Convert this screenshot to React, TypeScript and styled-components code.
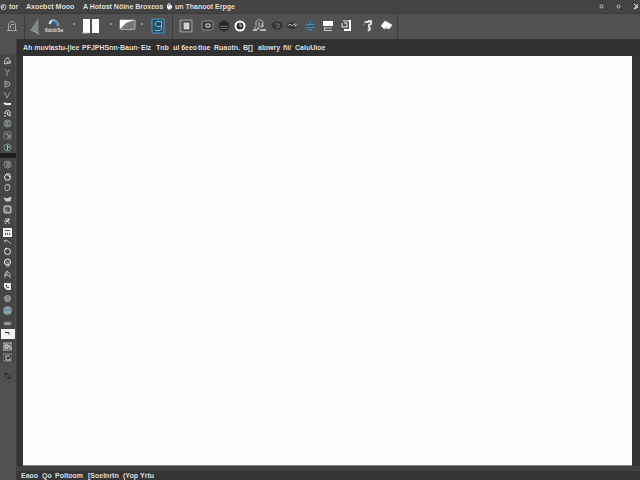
import React from "react";
import styled, { createGlobalStyle } from "styled-components";

const Global = createGlobalStyle`
  * { box-sizing: border-box; }
  body {
    margin: 0;
    background: #343434;
    color: #dedede;
    font-family: "Liberation Sans", sans-serif;
  }
  button {
    appearance: none;
    border: 0;
    padding: 0;
    margin: 0;
    background: none;
    color: inherit;
    font: inherit;
  }
  svg { display: block; flex: none; fill: none; stroke: #c4c4c4; stroke-width: 1; }
`;

const Frame = styled.div`
  display: flex;
  flex-direction: column;
  min-height: 100vh;
`;

const MenuBar = styled.header`
  display: flex;
  align-items: center;
  height: 13px;
  background: #434343;
  font-size: 7px;
  font-weight: 700;
  line-height: 12px;
`;

const Menus = styled.nav`
  display: flex;
  align-items: center;
  flex: 1;
  min-width: 0;
`;

const TextButton = styled.button<{ $w: number }>`
  display: flex;
  align-items: center;
  gap: 2px;
  flex: none;
  width: ${p => p.$w}px;
  white-space: nowrap;
`;

const WindowButtons = styled.div`
  display: flex;
  flex: none;
  gap: 8px;
`;

const WindowButton = styled.button`
  display: flex;
  align-items: center;
  justify-content: center;
  width: 9px;
  height: 12px;
`;

const Toolbar = styled.div`
  display: flex;
  align-items: center;
  height: 26px;
  background: #515151;
  border-top: 1px solid #3b3b3b;
`;

const Tool = styled.button<{ $w: number }>`
  display: flex;
  flex: none;
  flex-direction: column;
  align-items: center;
  justify-content: center;
  width: ${p => p.$w}px;
  height: 24px;
  padding-bottom: 2px;
`;

const ToolLabel = styled.span`
  font-size: 5px;
  font-weight: 700;
  line-height: 5px;
  white-space: nowrap;
`;

const Rule = styled.span`
  flex: none;
  width: 1px;
  height: 24px;
  background: #3a3a3a;
`;

const Gap = styled.span<{ $w: number }>`
  flex: none;
  width: ${p => p.$w}px;
`;

const Dot = styled.span<{ $w: number }>`
  display: flex;
  justify-content: center;
  flex: none;
  width: ${p => p.$w}px;
  padding-bottom: 6px;
  &::after {
    content: "";
    width: 2px;
    height: 2px;
    background: #8c8c8c;
  }
`;

const Body = styled.div`
  display: flex;
  flex: 1;
`;

const Rail = styled.aside`
  display: flex;
  flex: none;
  flex-direction: column;
  width: 17px;
  padding-top: 15px;
  background: #505050;
  border-right: 1px solid #3d3d3d;
`;

const RailGroup = styled.div`
  display: flex;
  flex-direction: column;
  width: 15px;
  background: #454545;
`;

const RailTool = styled.button<{ $h: number; $dim?: boolean }>`
  display: flex;
  align-items: center;
  justify-content: center;
  width: 15px;
  height: ${p => p.$h}px;
  opacity: ${p => (p.$dim ? 0.4 : 1)};
`;

const RailSplit = styled.span`
  width: 16px;
  height: 5px;
  background: #1f1f1f;
`;

const RailEnd = styled.div`
  padding-top: 6px;
`;

const Work = styled.main`
  display: flex;
  flex: 1;
  flex-direction: column;
  min-width: 0;
  background: #353535;
`;

const Tabs = styled.nav`
  display: flex;
  align-items: center;
  height: 17px;
  padding-left: 6px;
  background: #303030;
  font-size: 7px;
  font-weight: 700;
  line-height: 10px;
`;

const Sheet = styled.section`
  flex: 1;
  margin: 0 8px 0 6px;
  background: #fefefe;
  border-bottom: 1px solid #8a8a8a;
`;

const Status = styled.footer`
  display: flex;
  align-items: center;
  height: 14px;
  padding: 1px 0 0 4px;
  border-top: 5px solid #414141;
  font-size: 7px;
  font-weight: 700;
  line-height: 8px;
`;

const tabs: [string, number][] = [
  ["Ah muvlastu-(lee", 59], ["PFJPHSnn·", 38], ["Baun·", 21], ["Elz", 15],
  ["Tnb", 17], ["ul 6eeo", 25], ["tloe", 16], ["Ruaotn.", 29], ["B[]", 15],
  ["alowry", 25], ["ñl/", 12], ["CaluUioe", 32],
];

const statusItems: [string, number][] = [
  ["Eaoo", 21], ["Qo", 13], ["Poitoom", 33], ["[Soelnrtn", 35], ["(Yop", 17], ["Yrtu", 20],
];

const Icon = ({ w, h, children }: { w: number; h: number; children: React.ReactNode }) => (
  <svg width={w} height={h} viewBox={`0 0 ${w} ${h}`} aria-hidden="true">{children}</svg>
);

const tools: Record<string, React.ReactNode> = {
  Alerts: <Icon w={12} h={12}><path d="M1 10.500h10M2.500 10V5.500C2.500 0 9.500 0 9.500 5.500V10M5 4.500h3M4.500 8.500V5M7 8h1" stroke="#aaa" /></Icon>,
  Shape: <Icon w={12} h={18}><path d="M9.500 1v16L1 13.500z" fill="#7d8987" stroke="none" /><path d="M5 14l5 3.500" stroke="#a8b4b0" /></Icon>,
  Arc: <Icon w={12} h={9}><path d="M1.500 5C3-.5 9 .5 10 7" stroke="#dce7f1" strokeWidth="2" /><path d="M4 2.500C8 1.500 9 4 9.500 7" stroke="#3482c6" strokeWidth="2" /></Icon>,
  Columns: <Icon w={18} h={16}><path d="M1 1h7v14H1zM10 1h7v14h-7z" fill="#fff" stroke="none" /><path d="M0 15h7" stroke="#bbb" /></Icon>,
  Picture: <Icon w={18} h={13}><path d="M1 1h15v9l-8 1-7-1z" fill="#777" stroke="#b5b5b5" /><path d="M1 1h14L7 4 1 10z" fill="#fff" stroke="none" /><path d="M5 11l2 1.500 1-1" stroke="#333" /></Icon>,
  Swirl: <Icon w={14} h={16}><path d="M1 1h12v14H1z" fill="#26526a" stroke="#5394b5" /><path d="M10.500 3.500H6L4.500 5v2L6 8.500h4.500v-5M10.500 8v3L9 12.500H4" stroke="#77b8d3" /><path d="M6 6h3" stroke="#1d3346" /></Icon>,
  Frame: <Icon w={14} h={14}><path d="M1 1h12v12H1z" fill="#666" stroke="#999" /><path d="M4 3h7v8H4z" fill="#d4d4d4" stroke="#292929" /></Icon>,
  Camera: <Icon w={13} h={11}><rect x="1" y="1" width="11" height="9" rx="2" fill="#343434" stroke="#8d8d8d" /><path d="M5 4h4v3H5z" stroke="#ddd" /></Icon>,
  Disc: <Icon w={12} h={12}><circle cx="6" cy="6" r="5" fill="#292929" stroke="#343434" /><path d="M2 6.500h8M3 8.500h6" stroke="#666" /></Icon>,
  Clock: <Icon w={12} h={14}><circle cx="6" cy="7" r="4.500" fill="#303030" stroke="#fff" strokeWidth="2" /><path d="M6 4v3h2" stroke="#ddd" /></Icon>,
  People: <Icon w={15} h={13}><path d="M4 7V3.500C4 0 11 0 11 4v4M1 11h4l1-3 2 3h6M2 9l2-1M7 3v4l3 1V4" stroke="#bcbcbc" /><path d="M1 11h4M9 11h5" stroke="#eee" /></Icon>,
  Lens: <Icon w={12} h={9}><ellipse cx="6" cy="4.500" rx="5" ry="3.500" fill="#383838" stroke="#303030" /><path d="M4 3h4v3H5" stroke="#757575" /></Icon>,
  Eye: <Icon w={12} h={9}><ellipse cx="6" cy="4.500" rx="5" ry="3.500" fill="#303030" stroke="#454545" /><path d="M2 5l2-2 2 2 2-2h2v2H8" stroke="#b7b7b7" /></Icon>,
  Globe: <Icon w={12} h={12}><circle cx="6" cy="6" r="4.500" fill="#345169" stroke="#44677f" /><path d="M2 4.500h8M2 7.500h8M6 2v4M4 9.500h4" stroke="#5788a6" /></Icon>,
  Print: <Icon w={12} h={12}><path d="M1 1h10v5H1z" fill="#fff" stroke="none" /><path d="M2 8h8M3 10.500h7M2.500 7v4" stroke="#ccc" /></Icon>,
  Page: <Icon w={12} h={13}><path d="M3 2h6M2 4v4h5V4H4" stroke="#eee" /><path d="M10 1v10H4" stroke="#fff" strokeWidth="2" /></Icon>,
  Figure: <Icon w={10} h={13}><path d="M2 3h3l1-1h2v3L6 6v2l1 2-2 2" stroke="#ddd" strokeWidth="2" /><path d="M1 2v5" stroke="#868686" /></Icon>,
  Eraser: <Icon w={13} h={11}><path d="M5 1l7 4-3 4-2-1-3 1-3-3z" fill="#fff" stroke="#ddd" /><path d="M1 6l3 3 3-2" stroke="#aaa" /></Icon>,
};

const rail: Record<string, React.ReactNode> = {
  lasso: <path d="M1.500 6c0-2 1-2 2-4h2c1 1-1 2 2 3v2l-6 1zM3 6h4" />,
  nib: <path d="M2 1l2 3v4M6 1v2L4 4" stroke="#999" />,
  flag: <path d="M2 8V2l5 2-1 3-4 1M3 5h2" stroke="#aaa" />,
  vee: <path d="M1.500 2L4 8l3-6" stroke="#919b98" />,
  brush: <path d="M1 4c2 2 5 1 7 1" stroke="#f4f4f4" strokeWidth="2" />,
  stamp: <path d="M2 6c-1-3 4-5 5-2s-2 4-3 2l1-2M1 8h2M6 7l2 1" stroke="#eee" />,
  ring: <><circle cx="4.500" cy="4.500" r="3.500" stroke="#899692" /><path d="M2 3h5M2 6h5M4 3v3" stroke="#a3aba8" /></>,
  board: <><path d="M1 1h7v7H1z" stroke="#708078" /><path d="M2 3h3v2h3M4 7l3-1" stroke="#a1aaa4" /></>,
  ball: <><circle cx="4.500" cy="4.500" r="3.500" fill="#36413c" stroke="#8a9b91" /><path d="M4.500 2v5M5 4h2" stroke="#bbc5be" /></>,
  target: <><circle cx="4.500" cy="4.500" r="3.500" stroke="#929292" /><path d="M3 3h3v3H4V4" stroke="#aaa" /></>,
  bag: <path d="M1.500 5l2-3h3l1 3-1 3h-4zM3 2l4 3" stroke="#eee" />,
  shield: <path d="M2 3l2-2 3 2-1 4-3 1-1-2zM4 2h3" stroke="#b2b2b2" />,
  leaf: <path d="M1 4l3 1 4-2-1 4H3z" fill="#ccc" stroke="#ccc" />,
  photo: <><rect x="1" y="1" width="7" height="7" rx="1" fill="#888" stroke="#ccc" /><path d="M3 5V3h3v3H4" stroke="#333" /></>,
  person: <path d="M2 3h4L4 5l3 3M2 8l2-3M1 5h5M6 2v3" stroke="#d0d0d0" />,
  save: <><path d="M0 0h9v9H0z" fill="#eee" stroke="#fff" /><path d="M2 2.500h5M2.500 5v2M4.500 5v2M6.500 5v2" stroke="#555" /></>,
  curve: <path d="M1 3l2-1 3 2 2 2M1 4l2-1" stroke="#bdbdbd" />,
  circle: <><circle cx="4.500" cy="4.500" r="3" stroke="#eee" /><path d="M2 2l2-1" stroke="#fff" /></>,
  head: <><circle cx="4.500" cy="4" r="3" stroke="#fff" /><path d="M3 4h3M3 8h4M5 5v3" stroke="#dca7a4" /></>,
  anchor: <path d="M2 8V4l2-3 3 3v4M4 2v3l2 1M1 5h3" stroke="#afbab6" />,
  cup: <path d="M2 2h5v5H4L2 5zM4 4h3" stroke="#e5e5e5" strokeWidth="2" />,
  wheel: <><circle cx="4.500" cy="4.500" r="3" fill="#777" stroke="#aaa" /><path d="M3 3v4M5 3v4M7 4v2" stroke="#999" /></>,
  blue: <><rect x="1" y="1" width="7" height="7" rx="2" fill="#657e8b" stroke="#a1b3bc" /><path d="M2 6h5M3 3h3" stroke="#bdd0d3" /></>,
  bar: <><path d="M1 4h7v3H1z" fill="#bbc3be" stroke="#606966" /><path d="M3 5h4" stroke="#6d8580" /></>,
  camera: <><path d="M0 1h9v7H0z" fill="#606060" stroke="#bbb" /><path d="M2 3h3v3H2zM6 3l2 4" stroke="#eee" /></>,
  slide: <><path d="M0 1h9v7H0z" fill="#393939" stroke="#999" /><path d="M2 3h5M3 3v4h4V5" stroke="#ccc" /></>,
};

const upperRail: [string, number][] = [
  ["lasso", 12], ["nib", 12], ["flag", 11], ["vee", 10], ["brush", 8],
  ["stamp", 10], ["ring", 12], ["board", 12], ["ball", 12],
];
const lowerRail: [string, number][] = [
  ["target", 12], ["bag", 12], ["shield", 11], ["leaf", 11], ["photo", 11],
  ["person", 11], ["save", 12], ["curve", 8], ["circle", 11], ["head", 11],
  ["anchor", 12], ["cup", 12], ["wheel", 12], ["blue", 12], ["bar", 12],
  ["selected", 12], ["camera", 12], ["slide", 11],
];

const RailIcon = ({ name }: { name: string }) =>
  name === "selected" ? (
    <Icon w={15} h={10}><path d="M1 0h14v10H1z" fill="#f4f4f4" stroke="none" /><path d="M5 3.500h4v2" stroke="#333" /></Icon>
  ) : (
    <Icon w={9} h={9}>{rail[name]}</Icon>
  );

const RailButtons = ({ items }: { items: [string, number][] }) => (
  <RailGroup>
    {items.map(([name, h]) => (
      <RailTool key={name} $h={h} aria-label={name}><RailIcon name={name} /></RailTool>
    ))}
  </RailGroup>
);

const ToolButton = ({ name, w }: { name: string; w: number }) => (
  <Tool $w={w} aria-label={name}>{tools[name]}</Tool>
);

export default function App() {
  return (
    <>
      <Global />
      <Frame>
        <MenuBar>
          <Menus>
            <TextButton $w={26}>
              <Icon w={7} h={8}><circle cx="3.500" cy="4" r="2.500" /><path d="M3 2v3M1 4h3" /></Icon>tor
            </TextButton>
            <TextButton $w={57}>Axoebct Mooo</TextButton>
            <TextButton $w={83}>A Hotost Nöine Broxeos</TextButton>
            <TextButton $w={80}>
              <Icon w={7} h={9}><path d="M3 1l3 3v2L3 8 1 6V3z" fill="#eee" stroke="none" /><path d="M3 2v2" stroke="#666" /></Icon>un Thanoot Erpge
            </TextButton>
          </Menus>
          <WindowButtons>
            <WindowButton aria-label="Minimize"><Icon w={5} h={5}><circle cx="2.500" cy="2.500" r="1.500" /></Icon></WindowButton>
            <WindowButton aria-label="Maximize"><Icon w={5} h={5}><circle cx="2.500" cy="2.500" r="1.500" /></Icon></WindowButton>
            <WindowButton aria-label="Close"><Icon w={6} h={7}><path d="M1 1l4 3-4 2M5 1L1 6" stroke="#eee" /></Icon></WindowButton>
          </WindowButtons>
        </MenuBar>
        <Toolbar>
          <ToolButton name="Alerts" w={24} />
          <Rule />
          <ToolButton name="Shape" w={19} />
          <Tool $w={20}>{tools.Arc}<ToolLabel>6dobSa</ToolLabel></Tool>
          <Dot $w={20} />
          <ToolButton name="Columns" w={14} />
          <Dot $w={26} />
          <ToolButton name="Picture" w={8} />
          <Dot $w={20} />
          <ToolButton name="Swirl" w={12} />
          <Gap $w={8} />
          <Rule />
          <ToolButton name="Frame" w={26} />
          <ToolButton name="Camera" w={16} />
          <ToolButton name="Disc" w={18} />
          <ToolButton name="Clock" w={14} />
          <ToolButton name="People" w={24} />
          <ToolButton name="Lens" w={12} />
          <ToolButton name="Eye" w={18} />
          <ToolButton name="Globe" w={18} />
          <ToolButton name="Print" w={18} />
          <ToolButton name="Page" w={18} />
          <ToolButton name="Figure" w={26} />
          <ToolButton name="Eraser" w={10} />
          <Gap $w={6} />
          <Rule />
        </Toolbar>
        <Body>
          <Rail>
            <RailButtons items={upperRail} />
            <RailSplit />
            <RailButtons items={lowerRail} />
            <RailEnd>
              <RailTool $h={12} $dim aria-label="rotate">
                <Icon w={9} h={9}><path d="M2 6V3h3M4 7h3V4" stroke="#111" strokeWidth="2" /></Icon>
              </RailTool>
            </RailEnd>
          </Rail>
          <Work>
            <Tabs>
              {tabs.map(([text, w]) => <TextButton key={text} $w={w}>{text}</TextButton>)}
            </Tabs>
            <Sheet />
            <Status>
              {statusItems.map(([text, w]) => <TextButton key={text} $w={w}>{text}</TextButton>)}
            </Status>
          </Work>
        </Body>
      </Frame>
    </>
  );
}
